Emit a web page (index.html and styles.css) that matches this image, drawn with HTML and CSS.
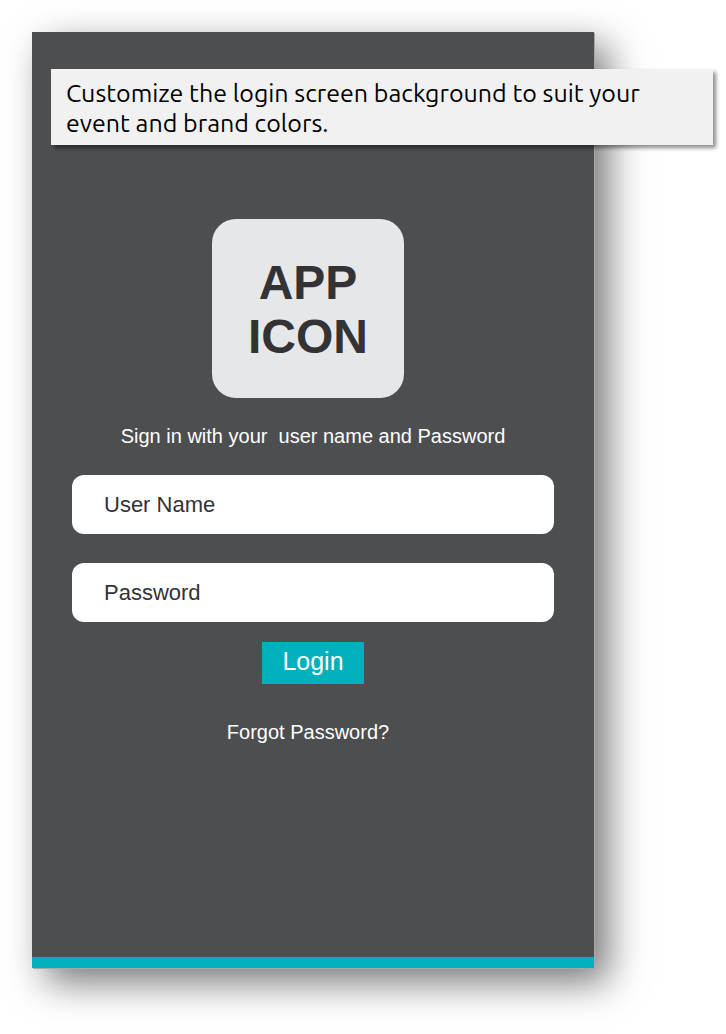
FILE: index.html
```html
<!DOCTYPE html>
<html lang="en">
<head>
<meta charset="utf-8">
<meta name="viewport" content="width=device-width, initial-scale=1">
<title>Login</title>
<link rel="stylesheet" href="styles.css">
</head>
<body>
<main class="stage">
  <p class="callout">Customize the login screen background to suit your event and brand colors.</p>
  <section class="screen">
    <h1 class="app-icon">APP<br>ICON</h1>
    <form class="login">
      <p class="hint">Sign in with your&nbsp; user name and Password</p>
      <input class="field" type="text" placeholder="User Name" aria-label="User Name">
      <input class="field" type="password" placeholder="Password" aria-label="Password">
      <button class="submit" type="button">Login</button>
      <a class="forgot" href="#">Forgot Password?</a>
    </form>
  </section>
</main>
</body>
</html>
```

FILE: styles.css
```css
* {
  box-sizing: border-box;
}

body {
  margin: 0;
  background: #fff;
  color: #fff;
  font-family: "Liberation Sans", Arial, sans-serif;
}

.stage {
  position: relative;
  display: flex;
  min-height: 100vh;
  padding: 32px 132px 66px 32px;
  overflow: hidden;
}

.callout {
  position: absolute;
  top: 69px;
  left: 51px;
  right: 13px;
  margin: 0;
  padding: 9px 48px 7px 15px;
  background: #f1f1f1;
  box-shadow: 3px 3px 4px rgba(0, 0, 0, 0.45);
  color: #000;
  font: 25px/30px Ubuntu, "Noto Sans", sans-serif;
}

.screen {
  flex: 1;
  display: flex;
  flex-direction: column;
  align-items: center;
  padding: 187px 40px 40px;
  border-bottom: 11px solid #00b0bd;
  background: #4d4e50;
  box-shadow: 1px 1px 0 #a4a8aa, 14px 14px 36px rgba(0, 0, 0, 0.54);
}

.app-icon {
  width: 192px;
  margin: 0;
  padding: 37px 0 34px;
  border-radius: 24px;
  background: #e6e7e9;
  color: #333335;
  font-size: 48px;
  line-height: 54px;
  text-align: center;
}

.app-icon,
.forgot {
  margin-right: 10px;
}

.login {
  display: flex;
  flex-direction: column;
  align-items: center;
  width: 100%;
}

.hint {
  margin: 26px 0 27px;
  font-size: 20px;
  line-height: 24px;
}

.field {
  width: 100%;
  height: 59px;
  margin: 0 0 29px;
  padding: 0 32px;
  border: 0;
  border-radius: 12px;
  background: #fff;
  color: #333335;
  font: 22px "Liberation Sans", Arial, sans-serif;
}

.field::placeholder {
  color: #333335;
  opacity: 1;
}

.field + .field {
  margin-bottom: 20px;
}

.submit {
  height: 42px;
  padding: 0 20px 4px;
  border: 0;
  background: #00b0bd;
  color: #fff;
  font: 25px "Liberation Sans", Arial, sans-serif;
}

.forgot {
  margin-top: 36px;
  color: #fff;
  font-size: 20px;
  line-height: 24px;
  text-decoration: none;
}
```
